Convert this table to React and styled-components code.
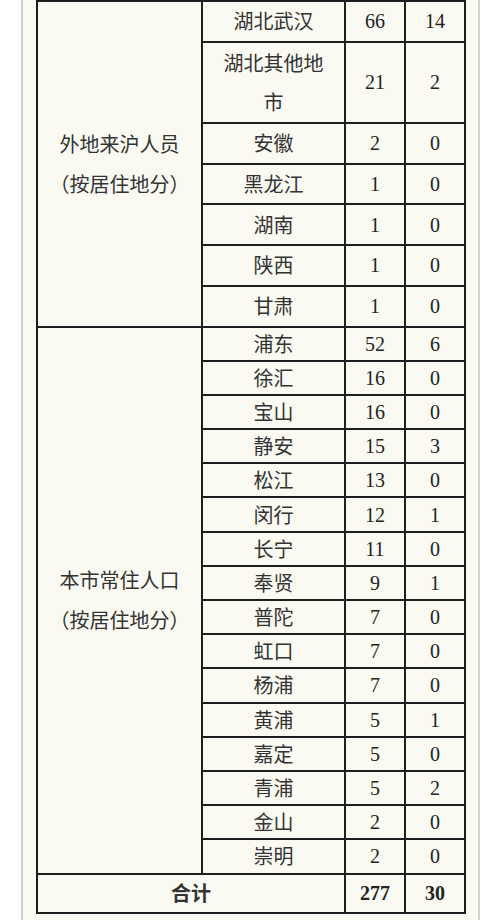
import React from "react";
import styled, { createGlobalStyle } from "styled-components";

const Global = createGlobalStyle`
  html, body {
    margin: 0;
    padding: 0;
    background: #ffffff;
  }
  * { box-sizing: border-box; }
`;

const Page = styled.div`
  margin-left: 21px;
  width: 459px;
  min-height: 920px;
  background: #fafaf2;
  border-left: 2px solid #d2d2cc;
  border-right: 2px solid #d2d2cc;
  padding: 0 14px 0 13px;
`;

const Table = styled.table`
  width: 428px;
  border-collapse: collapse;
  table-layout: fixed;
  border: 2px solid #1e1e1e;
  background: #fafaf2;
`;

const Row = styled.tr``;

const Cell = styled.td`
  border: 2px solid #1e1e1e;
  padding: 0 ${(p) => (p.$kind === "region" ? 12 : 4)}px;
  text-align: center;
  vertical-align: middle;
  height: ${(p) => p.$h}px;
  color: ${(p) => (p.$kind === "num" ? "#222" : "#333")};
  font-family: ${(p) =>
    p.$kind === "num"
      ? '"Liberation Serif", "Times New Roman", serif'
      : '"Noto Sans CJK SC", "Noto Sans", sans-serif'};
  font-size: 20px;
  font-weight: ${(p) => (p.$bold ? 700 : 400)};
  line-height: ${(p) => p.$lh || 30}px;
`;

const GroupLabel = styled.div`
  line-height: 40px;
`;

const outside = [
  ["湖北武汉", 66, 14, 40.75],
  ["湖北其他地市", 21, 2, 81, 39],
  ["安徽", 2, 0, 40.75],
  ["黑龙江", 1, 0, 40.75],
  ["湖南", 1, 0, 40.75],
  ["陕西", 1, 0, 40.75],
  ["甘肃", 1, 0, 40.75],
];

const local = [
  ["浦东", 52, 6],
  ["徐汇", 16, 0],
  ["宝山", 16, 0],
  ["静安", 15, 3],
  ["松江", 13, 0],
  ["闵行", 12, 1],
  ["长宁", 11, 0],
  ["奉贤", 9, 1],
  ["普陀", 7, 0],
  ["虹口", 7, 0],
  ["杨浦", 7, 0],
  ["黄浦", 5, 1],
  ["嘉定", 5, 0],
  ["青浦", 5, 2],
  ["金山", 2, 0],
  ["崇明", 2, 0],
];

function Group({ rows, label, h }) {
  return rows.map(([name, a, b, rh, lh], i) => {
    const height = rh || h;
    return (
      <Row key={name}>
        {i === 0 && (
          <Cell $kind="group" rowSpan={rows.length}>
            <GroupLabel>{label[0]}</GroupLabel>
            <GroupLabel>{label[1]}</GroupLabel>
          </Cell>
        )}
        <Cell $kind="region" $h={height} $lh={lh}>
          {name}
        </Cell>
        <Cell $kind="num" $h={height}>
          {a}
        </Cell>
        <Cell $kind="num" $h={height}>
          {b}
        </Cell>
      </Row>
    );
  });
}

export default function App() {
  return (
    <>
      <Global />
      <Page>
        <Table>
          <colgroup>
            <col style={{ width: 165 }} />
            <col style={{ width: 143 }} />
            <col style={{ width: 60 }} />
            <col style={{ width: 60 }} />
          </colgroup>
          <tbody>
            <Group rows={outside} label={["外地来沪人员", "（按居住地分）"]} h={40.75} />
            <Group rows={local} label={["本市常住人口", "（按居住地分）"]} h={34.2} />
            <Row>
              <Cell $kind="region" colSpan={2} $h={39} $bold>
                合计
              </Cell>
              <Cell $kind="num" $h={39} $bold>
                277
              </Cell>
              <Cell $kind="num" $h={39} $bold>
                30
              </Cell>
            </Row>
          </tbody>
        </Table>
      </Page>
    </>
  );
}
